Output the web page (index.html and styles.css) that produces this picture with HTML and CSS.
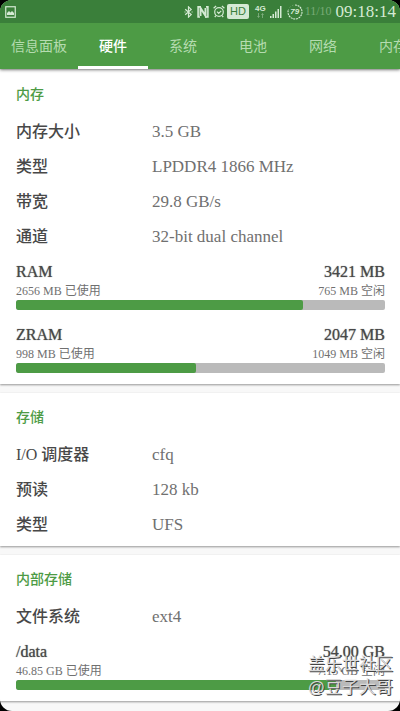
FILE: index.html
```html
<!DOCTYPE html>
<html lang="zh-CN">
<head>
<meta charset="utf-8">
<meta name="viewport" content="width=device-width, initial-scale=1">
<title>硬件</title>
<link rel="stylesheet" href="styles.css">
</head>
<body>
<div class="screen">
  <header class="app-bar">
    <div class="status">
      <svg class="status-photo" width="11" height="12" viewBox="0 0 11 12" aria-hidden="true"><rect x=".75" y=".75" width="9.5" height="10.5" fill="none" stroke="currentColor" stroke-width="1.2"/><path d="M2 9V7l2-2 1.5 1.5L7 5l2 2v2z" fill="currentColor"/></svg>
      <div class="status-icons">
        <svg width="9" height="12" viewBox="0 0 9 12" fill="none" stroke="currentColor" stroke-width="1.2" aria-hidden="true"><path d="M1.2 3.2l6 5.4-2.700 2.500V.9l2.700 2.500-6 5.400"/><path d="M.5 6h1M7.600 6h1"/></svg>
        <svg class="nfc" width="12" height="12" viewBox="0 0 12 12" fill="none" stroke="currentColor" aria-hidden="true"><path d="M4 .9H1.100V11H3M8 11h2.900V.9H9" stroke-width="1.600"/><path d="M3.500 10V2l5 7.800V2" stroke-width="2"/></svg>
        <svg class="alarm" width="12" height="13" viewBox="0 0 12 13" fill="none" stroke="currentColor" stroke-width="1.200" aria-hidden="true"><circle cx="6" cy="7" r="4.300"/><path d="M.6 3.300L3.100 1M11.400 3.300L8.900 1M4 6.600l1.700 1.700 2.500-2.500M2.800 10.600l-1 1.500M9.200 10.600l1 1.500"/></svg>
        <span class="hd">HD</span>
        <span class="network"><span>4G</span><svg width="7" height="5" viewBox="0 0 7 5" fill="none" stroke="currentColor" stroke-width=".8" opacity=".5" aria-hidden="true"><path d="M1.500 0v4M.5 3l1 1.500 1-1.500M5.500 5V1M4.500 2l1-1.500 1 1.500"/></svg></span>
        <svg class="signal" width="12" height="12" viewBox="0 0 12 12" fill="currentColor" aria-hidden="true"><path d="M0 10h1.500v2H0zM2.500 8H4v4H2.500zM5 5.500h1.500V12H5zM7.500 3H9v9H7.500zM10 0h1.500v12H10z"/></svg>
        <span class="battery"><svg width="16" height="16" viewBox="0 0 16 16" fill="none" stroke="currentColor" aria-hidden="true"><path d="M8 1a7 7 0 1 1-6.700 5" stroke-width="1.100" stroke-dasharray="2 .7"/><path d="M1.300 6A7 7 0 0 1 8 1" stroke-width=".8" stroke-dasharray="1 2" opacity=".5"/></svg><span class="battery-level">79</span></span>
        <span class="date">11/10</span>
        <time class="clock">09:18:14</time>
      </div>
    </div>
    <nav class="tabs">
      <button class="tab" type="button">信息面板</button>
      <button class="tab tab-active" type="button" aria-current="page">硬件</button>
      <button class="tab" type="button">系统</button>
      <button class="tab" type="button">电池</button>
      <button class="tab" type="button">网络</button>
      <button class="tab" type="button">内存</button>
    </nav>
  </header>

  <main class="cards">
    <section class="card">
      <h2>内存</h2>
      <dl class="facts">
        <dt>内存大小</dt><dd>3.5 GB</dd>
        <dt>类型</dt><dd>LPDDR4 1866 MHz</dd>
        <dt>带宽</dt><dd>29.8 GB/s</dd>
        <dt>通道</dt><dd>32-bit dual channel</dd>
      </dl>
      <div class="meters">
        <div class="meter">
          <div class="meter-total"><span>RAM</span><span>3421 MB</span></div>
          <div class="meter-detail"><span>2656 MB 已使用</span><span>765 MB 空闲</span></div>
          <div class="track"><div class="fill" style="width: 77.8%"></div></div>
        </div>
        <div class="meter">
          <div class="meter-total"><span>ZRAM</span><span>2047 MB</span></div>
          <div class="meter-detail"><span>998 MB 已使用</span><span>1049 MB 空闲</span></div>
          <div class="track"><div class="fill" style="width: 48.8%"></div></div>
        </div>
      </div>
    </section>

    <section class="card">
      <h2>存储</h2>
      <dl class="facts">
        <dt>I/O 调度器</dt><dd>cfq</dd>
        <dt>预读</dt><dd>128 kb</dd>
        <dt>类型</dt><dd>UFS</dd>
      </dl>
    </section>

    <section class="card">
      <h2>内部存储</h2>
      <dl class="facts">
        <dt>文件系统</dt><dd>ext4</dd>
      </dl>
      <div class="meters">
        <div class="meter">
          <div class="meter-total"><span>/data</span><span>54.00 GB</span></div>
          <div class="meter-detail"><span>46.85 GB 已使用</span><span>7.15 GB 空闲</span></div>
          <div class="track"><div class="fill" style="width: 86.8%"></div></div>
        </div>
      </div>
    </section>
  </main>
  <div class="watermark"><span>盖乐世社区</span><span>@豆子大哥</span></div>
</div>
</body>
</html>
```
FILE: styles.css
```css
* {
  box-sizing: border-box;
}

body {
  margin: 0;
  background: #000;
  color: #707070;
  font-family: "Liberation Serif", "Noto Sans CJK SC", serif;
}

.screen {
  position: relative;
  min-height: 100vh;
  overflow: hidden;
  border-radius: 12px;
  background: #f8f8f8;
}

.app-bar {
  position: relative;
  background: #4d9b45;
  box-shadow: 0 1px 3px rgba(0, 0, 0, 0.5);
}

.status {
  display: flex;
  align-items: center;
  justify-content: space-between;
  height: 23px;
  padding: 0 4px 0 5px;
  background: #3a7f3a;
  color: #d5ead4;
}

.status svg {
  display: block;
}

.status-icons {
  display: flex;
  align-items: center;
}

.nfc,
.alarm {
  margin-left: 4px;
}

.hd {
  margin-left: 2px;
  padding: 0 3px;
  border-radius: 2px;
  background: #d5ead4;
  color: #3a7f3a;
  font: 11px/15px "Liberation Sans", sans-serif;
}

.network {
  display: flex;
  flex-direction: column;
  align-items: center;
  margin-left: 6px;
  font: bold 8px/8px "Liberation Sans", sans-serif;
}

.signal {
  margin-left: 4px;
}

.battery {
  display: grid;
  place-items: center;
  margin-left: 5px;
}

.battery > * {
  grid-area: 1 / 1;
}

.battery-level {
  font: italic bold 8px/16px "Liberation Sans", sans-serif;
}

.date {
  margin-left: 2px;
  color: #79ac78;
  font-size: 12px;
}

.clock {
  margin-left: 4px;
  font-size: 17px;
  line-height: 23px;
}

.tabs {
  display: flex;
  height: 46px;
  overflow: hidden;
}

.tab {
  flex: none;
  min-width: 70px;
  padding: 5px 11px 0;
  border: 0;
  border-bottom: 3px solid transparent;
  background: none;
  color: #b5dcb0;
  font: 14px/20px "Liberation Serif", "Noto Sans CJK SC", serif;
}

.tab-active {
  border-bottom-color: #fff;
  color: #fff;
  font-weight: 500;
}

.cards {
  display: grid;
  gap: 9px;
  padding: 1px 0 10px;
}

.card {
  padding: 15px 15px 4px 16px;
  background: #fff;
  box-shadow: 0 1px 2px rgba(0, 0, 0, 0.4);
}

h2 {
  margin: 0 0 9px;
  color: #4d9b45;
  font-size: 14px;
  font-weight: 500;
  line-height: 20px;
}

.facts {
  display: grid;
  grid-template-columns: 136px 1fr;
  margin: 0;
  line-height: 35px;
}

dt {
  height: 35px;
  color: #484848;
  font-size: 16px;
  font-weight: 500;
}

dd {
  height: 35px;
  margin: 0;
  font-size: 17px;
}

.meters {
  display: grid;
  gap: 16px;
  padding: 9px 0 7px;
}

.meter-total,
.meter-detail {
  display: flex;
  justify-content: space-between;
}

.meter-total {
  height: 20px;
  color: #484848;
  font-size: 16px;
  line-height: 18px;
  text-shadow: 0 0 1px #707070;
}

.meter-detail {
  height: 17px;
  font-size: 12px;
  line-height: 16px;
}

.track {
  height: 10px;
  overflow: hidden;
  border-radius: 2px;
  background: #bababa;
}

.fill {
  height: 100%;
  border-radius: 2px;
  background: #4d9b45;
}

.watermark {
  position: absolute;
  right: 7px;
  bottom: 12px;
  display: grid;
  justify-items: end;
  color: #d8d8d8;
  font: 17px/23px "Liberation Sans", "Noto Sans CJK SC", sans-serif;
  text-shadow: 1px 1px 0 #444;
}
```
